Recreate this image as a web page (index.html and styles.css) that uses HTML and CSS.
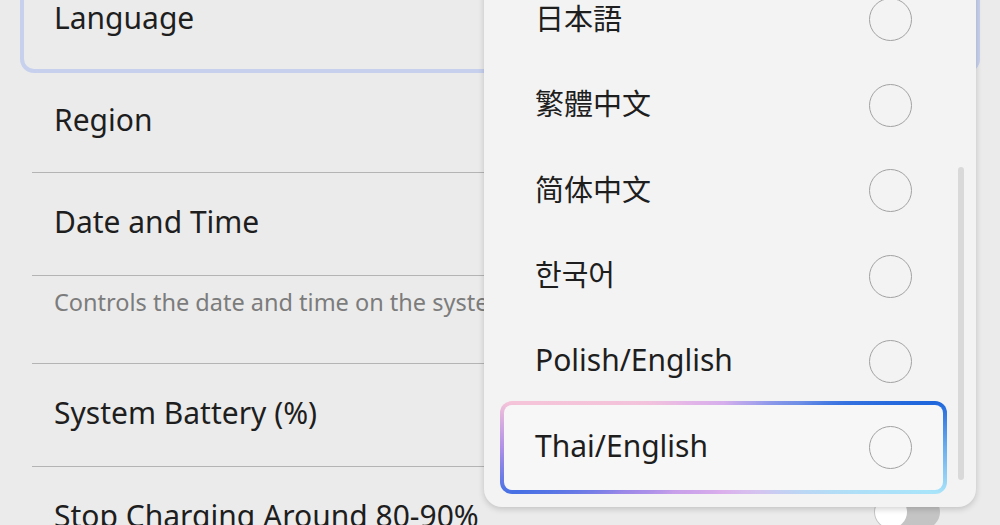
FILE: index.html
```html
<!DOCTYPE html>
<html lang="en">
  <head>
    <meta charset="UTF-8" />
    <meta name="viewport" content="width=device-width, initial-scale=1.0" />
    <title>System Settings</title>
    <link rel="stylesheet" href="styles.css">
  </head>
  <body>
    <div class="settings">
      <div class="card">
        <span class="label">Language</span>
      </div>

      <div class="row">
        <span class="label">Region</span>
      </div>

      <div class="row">
        <span class="label">Date and Time</span>
      </div>
      <div class="row desc">
        <p>Controls the date and time on the system.</p>
      </div>

      <div class="row">
        <span class="label">System Battery (%)</span>
      </div>

      <div class="row">
        <span class="label">Stop Charging Around 80-90%</span>
        <div class="toggle"><div class="knob"></div></div>
      </div>
    </div>

    <div class="dropdown">
      <div class="options">
        <div class="option">
          <span class="cjk" lang="ja">日本語</span>
          <div class="radio"></div>
        </div>
        <div class="option">
          <span class="cjk" lang="zh-Hant">繁體中文</span>
          <div class="radio"></div>
        </div>
        <div class="option">
          <span class="cjk" lang="zh-Hans">简体中文</span>
          <div class="radio"></div>
        </div>
        <div class="option">
          <span class="cjk" lang="ko">한국어</span>
          <div class="radio"></div>
        </div>
        <div class="option">
          <span>Polish/English</span>
          <div class="radio"></div>
        </div>
        <div class="option selected">
          <span>Thai/English</span>
          <div class="radio"></div>
        </div>
      </div>
      <div class="scrollbar"></div>
    </div>
  </body>
</html>
```

FILE: styles.css
```css
* {
  padding: 0;
  margin: 0;
  box-sizing: border-box;
}

html,
body {
  height: 100%;
  overflow: hidden;
}

body {
  position: relative;
  background: #ebebeb;
  color: #1e1e1e;
  font-family: "Noto Sans", "Noto Sans CJK JP", sans-serif;
}

.settings {
  display: flex;
  flex-direction: column;
  padding-right: 32px;
}

.card {
  display: flex;
  align-items: center;
  height: 103px;
  margin-top: -30px;
  margin-left: 20px;
  margin-right: -12px;
  padding-left: 30px;
  padding-bottom: 8px;
  border: 4px solid #c7d1ee;
  border-radius: 14px;
}

.label {
  font-size: 30px;
  line-height: 1;
}

.row {
  display: flex;
  align-items: center;
  justify-content: space-between;
  height: 100px;
  margin-left: 32px;
  padding-left: 22px;
  padding-right: 28px;
  padding-bottom: 5px;
  border-bottom: 1px solid #b4b4b4;
}

.row + .row {
  height: 103px;
}

.row.desc {
  align-items: flex-start;
  height: 88px;
  padding-top: 10px;
  color: #7c7c7c;
  font-size: 23.5px;
  white-space: nowrap;
}

.toggle {
  width: 66px;
  height: 34px;
  margin-top: -8px;
  border-radius: 17px;
  background: #c4c4c4;
  padding: 1px;
}

.knob {
  width: 32px;
  height: 32px;
  border-radius: 50%;
  background: #fff;
}

/* language picker over the list */
.dropdown {
  position: absolute;
  top: -40px;
  left: 484px;
  width: 492px;
  height: 547px;
  background: #f3f3f3;
  border-radius: 18px;
  box-shadow: 0 2px 6px rgba(0, 0, 0, 0.18);
}

.options {
  padding-top: 17px;
}

.option {
  position: relative;
  display: flex;
  align-items: center;
  justify-content: space-between;
  height: 85.5px;
  padding-left: 51px;
  padding-right: 64px;
  font-size: 30px;
}

.option span {
  position: relative;
  line-height: 1;
  padding-bottom: 3px;
}

.option .cjk {
  font-size: 29px;
}

.radio {
  position: relative;
  width: 43px;
  height: 43px;
  border: 1.5px solid #a2a2a2;
  border-radius: 50%;
}

.option.selected::before {
  content: "";
  position: absolute;
  top: -4px;
  bottom: -4px;
  left: 16px;
  right: 29px;
  border: 4px solid transparent;
  border-radius: 12px;
  background:
    linear-gradient(#f7f7f7, #f7f7f7) padding-box,
    conic-gradient(
      #d6aeec 0deg,
      #a8a2ec 35deg,
      #6e8ee6 60deg,
      #3672e0 70deg,
      #1f66dc 78deg,
      #6aaeee 90deg,
      #a8e4fa 102deg,
      #bcd6f4 120deg,
      #d4c4f0 140deg,
      #dcb0ec 180deg,
      #c8a0ea 228deg,
      #9c88e8 246deg,
      #4670e4 258deg,
      #b090e8 270deg,
      #f6c4d8 282deg,
      #f2c2dc 300deg,
      #e4b6e8 320deg,
      #d6aeec 360deg
    ) border-box;
}

.scrollbar {
  position: absolute;
  top: 207px;
  left: 474px;
  width: 6px;
  height: 313px;
  border-radius: 3px;
  background: #d9d9d9;
}
```
